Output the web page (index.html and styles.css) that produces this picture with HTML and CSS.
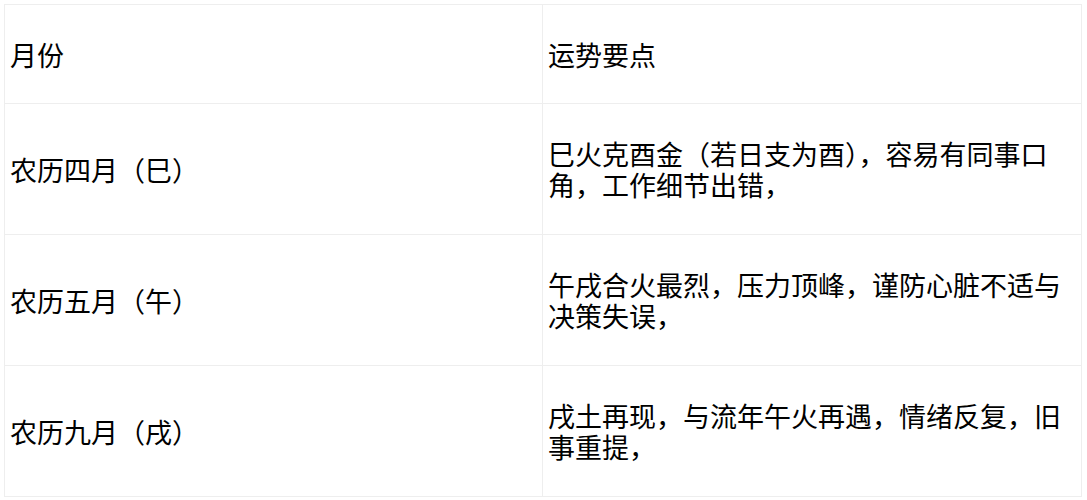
FILE: index.html
```html
<!DOCTYPE html>
<html lang="zh">
<head>
<meta charset="utf-8">
<link rel="stylesheet" href="styles.css">
</head>
<body>
<table class="fortune">
  <colgroup><col class="c1"><col class="c2"></colgroup>
  <tr class="head"><td>月份</td><td>运势要点</td></tr>
  <tr class="row"><td>农历四月（巳）</td><td>巳火克酉金（若日支为酉），容易有同事口角，工作细节出错，</td></tr>
  <tr class="row"><td>农历五月（午）</td><td>午戌合火最烈，压力顶峰，谨防心脏不适与决策失误，</td></tr>
  <tr class="row"><td>农历九月（戌）</td><td>戌土再现，与流年午火再遇，情绪反复，旧事重提，</td></tr>
</table>
</body>
</html>
```

FILE: styles.css
```css
html, body {
  margin: 0;
  background: #fff;
}
body {
  padding: 4px;
  font-family: "Noto Sans CJK SC", "Noto Sans", sans-serif;
  color: #000;
}
.fortune {
  border-collapse: collapse;
  width: 1077px;
  table-layout: fixed;
}
.fortune col.c1 { width: 538px; }
.fortune col.c2 { width: 539px; }
.fortune td {
  border: 1px solid #eeeeee;
  padding: 0 5px;
  font-size: 27px;
  line-height: 31px;
  vertical-align: middle;
}
.fortune .head td { height: 98px; }
.fortune .row td { height: 130px; }
```
